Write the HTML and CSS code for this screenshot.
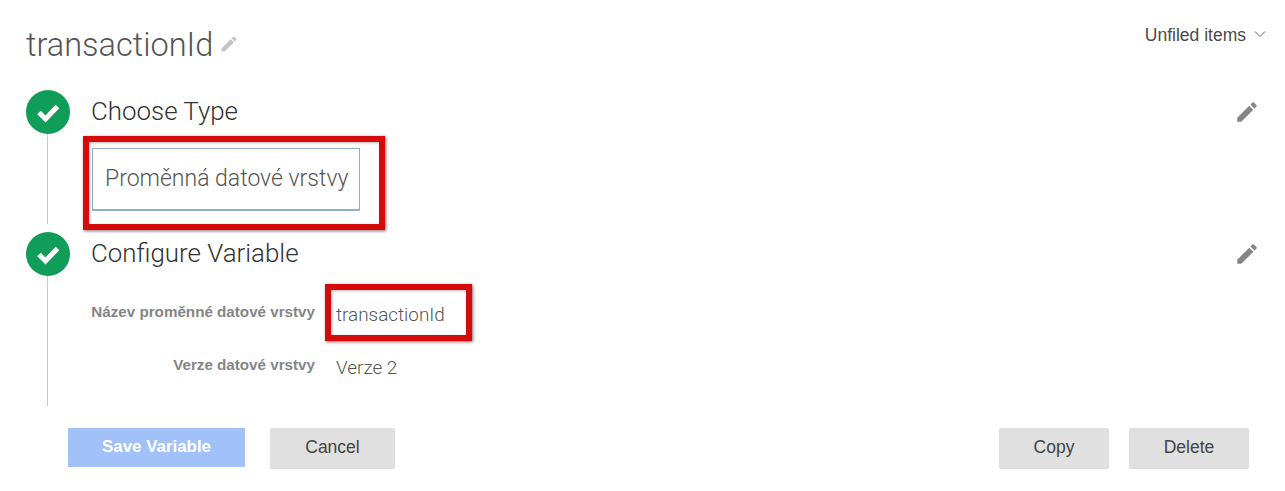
FILE: index.html
```html
<!DOCTYPE html>
<html lang="cs">
<head>
<meta charset="utf-8">
<title>transactionId</title>
<link rel="stylesheet" href="styles.css">
</head>
<body>
<main class="page">
  <header class="head">
    <div class="name">
      <h1>transactionId</h1>
      <svg class="pen-small" viewBox="0 0 24 24"><path d="M3 17.25V21h3.75L17.81 9.94l-3.75-3.75L3 17.25zM20.71 7.04a1 1 0 0 0 0-1.41l-2.34-2.34a1 1 0 0 0-1.41 0l-1.83 1.83 3.75 3.75 1.83-1.83z"/></svg>
    </div>
    <div class="folder">
      <span>Unfiled items</span>
      <svg class="chev" viewBox="0 0 12 8"><path d="M1 1.5l5 5 5-5"/></svg>
    </div>
  </header>

  <section class="step first">
    <div class="rail">
      <div class="dot"><svg viewBox="0 0 44 44"><path d="M13 22.5l6.5 6.5L31.5 16.5"/></svg></div>
      <div class="line"></div>
    </div>
    <div class="body">
      <div class="step-head">
        <h2>Choose Type</h2>
        <svg class="pen" viewBox="0 0 24 24"><path d="M3 17.25V21h3.75L17.81 9.94l-3.75-3.75L3 17.25zM20.71 7.04a1 1 0 0 0 0-1.41l-2.34-2.34a1 1 0 0 0-1.41 0l-1.83 1.83 3.75 3.75 1.83-1.83z"/></svg>
      </div>
      <div class="type-card">
        Proměnná datové vrstvy
        <div class="mark mark-type"></div>
      </div>
    </div>
  </section>

  <section class="step second">
    <div class="rail">
      <div class="dot"><svg viewBox="0 0 44 44"><path d="M13 22.5l6.5 6.5L31.5 16.5"/></svg></div>
      <div class="line"></div>
    </div>
    <div class="body">
      <div class="step-head">
        <h2>Configure Variable</h2>
        <svg class="pen" viewBox="0 0 24 24"><path d="M3 17.25V21h3.75L17.81 9.94l-3.75-3.75L3 17.25zM20.71 7.04a1 1 0 0 0 0-1.41l-2.34-2.34a1 1 0 0 0-1.41 0l-1.83 1.83 3.75 3.75 1.83-1.83z"/></svg>
      </div>
      <dl class="fields">
        <dt>Název proměnné datové vrstvy</dt>
        <dd class="marked">transactionId<div class="mark mark-name"></div></dd>
        <dt>Verze datové vrstvy</dt>
        <dd>Verze 2</dd>
      </dl>
    </div>
  </section>

  <footer class="actions">
    <div class="group">
      <button class="btn save">Save Variable</button>
      <button class="btn cancel">Cancel</button>
    </div>
    <div class="group right">
      <button class="btn copy">Copy</button>
      <button class="btn delete">Delete</button>
    </div>
  </footer>
</main>
</body>
</html>
```
FILE: styles.css
```css
* { box-sizing: border-box; }
html, body { margin: 0; height: 491px; overflow: hidden; background: #fff; }
body { font-family: Roboto, "Liberation Sans", sans-serif; color: #444; }
.page { width: 1285px; height: 491px; padding: 0 27px 0 26px; }

.head { display: flex; justify-content: space-between; height: 90px; }
.name { display: flex; align-items: flex-start; padding-top: 26px; }
h1 { margin: 0; font-size: 32.5px; line-height: 38px; font-weight: 300; color: #555; }
.pen-small { width: 20px; height: 20px; fill: #c4c4c4; margin: 8px 0 0 6px; }
.folder { display: flex; align-items: flex-start; padding: 25px 0 0; margin-right: -8px; font-family: "Liberation Sans", sans-serif; font-size: 17.5px; line-height: 20px; color: #4a4a4a; }
.chev { width: 12px; height: 8px; margin: 5px 0 0 8px; fill: none; stroke: #666; stroke-width: 1; }

.step { display: flex; }
.first { height: 142px; }
.second { height: 174px; }
.rail { width: 44px; display: flex; flex-direction: column; align-items: center; flex: none; }
.dot { width: 44px; height: 44px; border-radius: 50%; background: #0f9d58; flex: none; }
.dot svg { display: block; width: 44px; height: 44px; fill: none; stroke: #fff; stroke-width: 5; }
.line { width: 1px; background: #c8c8c8; margin-right: 1px; }
.first .line { height: 90px; }
.second .line { height: 130px; }
.body { flex: 1; padding-left: 21px; }

.step-head { display: flex; justify-content: space-between; align-items: flex-start; height: 44px; }
h2 { margin: 0; padding-top: 6px; font-size: 25.9px; line-height: 30px; font-weight: 300; color: #333; }
.pen { width: 26px; height: 26px; fill: #858585; margin: 9px -2px 0 0; }

.type-card { position: relative; width: 268px; height: 63px; margin: 14px 0 0 1px; padding-left: 12px; border: 1px solid #8fadd3; border-bottom-width: 2px; font-size: 23px; font-weight: 300; line-height: 59px; color: #555; background: #fff; }
.mark { position: absolute; border: 6px solid #d50b0b; box-shadow: 1px 1px 3px rgba(60, 0, 0, .6), inset 1px 1px 3px rgba(60, 0, 0, .3); }
.mark-type { left: -10px; top: -13px; width: 302px; height: 94px; }

.fields { display: grid; grid-template-columns: 224px auto; justify-content: start; margin: 0; padding-top: 25px; }
dt { text-align: right; font-family: "Liberation Sans", sans-serif; font-weight: 700; font-size: 15.2px; line-height: 20px; color: #858585; height: 53px; padding-top: 1px; }
dd { margin: 0 0 0 21px; font-size: 18.9px; font-weight: 300; line-height: 24px; color: #555; padding-top: 2px; }
.marked { position: relative; width: max-content; }
.mark-name { left: -11px; top: -17px; width: 147px; height: 57px; }

.actions { display: flex; justify-content: space-between; padding: 22px 9px 0 42px; }
.group { display: flex; gap: 25px; }
.right { gap: 20px; }
.btn { height: 40px; border: 0; border-radius: 2px; padding: 0 0 2px; font-family: "Liberation Sans", sans-serif; font-size: 17.5px; background: #e0e0e0; color: #444; box-shadow: 0 1px 1px rgba(0, 0, 0, .15); }
.save { width: 177px; height: 39px; background: #a1c1f8; color: #fff; font-size: 16.9px; font-weight: 700; box-shadow: none; border-radius: 0; }
.cancel { width: 125px; }
.copy { width: 110px; }
.delete { width: 120px; }
```
